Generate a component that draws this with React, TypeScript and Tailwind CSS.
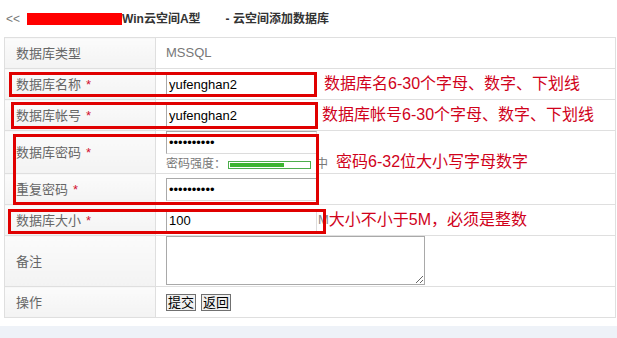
import React from "react";

const font = "font-['Liberation_Sans','Noto_Sans_CJK_SC',sans-serif]";

function Label({ text, req }: { text: string; req?: boolean }) {
  return (
    <td className="w-[151px] border border-[#dfdfdf] bg-gradient-to-b from-[#fbfbfb] to-[#f3f3f3] p-0 pl-[11px] align-middle text-[13px] leading-[15px] text-[#666]">
      {text}
      {req && <span className="ml-[5px] text-[#d2122e]">*</span>}
    </td>
  );
}

function TextInput({ value, pwd }: { value: string; pwd?: boolean }) {
  return (
    <input
      type={pwd ? "password" : "text"}
      defaultValue={value}
      className="block h-[23px] w-[151px] border border-[#a9a9a9] border-r-[#dcdcdc] border-b-[#dcdcdc] px-[2px] text-[13px] text-black outline-none"
    />
  );
}

function Note({ children }: { children: React.ReactNode }) {
  return <span className="text-[16px] leading-none text-[#d0021b]">{children}</span>;
}

export default function App() {
  return (
    <div className={`relative h-[338px] w-[617px] overflow-hidden bg-white ${font}`}>
      <div className="flex h-[37px] items-center pl-[6px] text-[12px]">
        <span className="text-[#777]">&lt;&lt;</span>
        <span className="ml-[7px] h-[12px] w-[95px] bg-[#ff0000]" />
        <span className="font-bold text-[#333]">Win云空间A型</span>
        <span className="ml-[25px] font-bold text-[#333]">- 云空间添加数据库</span>
      </div>

      <table className="ml-[4px] w-[612px] border-collapse">
        <tbody>
          <tr className="h-[31px]">
            <Label text="数据库类型" />
            <td className="border border-[#dfdfdf] p-0 pl-[10px] text-[13px] text-[#777]">MSSQL</td>
          </tr>
          <tr className="h-[31px]">
            <Label text="数据库名称" req />
            <td className="border border-[#dfdfdf] p-0 pl-[10px]">
              <div className="flex items-center">
                <TextInput value="yufenghan2" />
                <span className="ml-[7px]">
                  <Note>数据库名6-30个字母、数字、下划线</Note>
                </span>
              </div>
            </td>
          </tr>
          <tr className="h-[31px]">
            <Label text="数据库帐号" req />
            <td className="border border-[#dfdfdf] p-0 pl-[10px]">
              <div className="flex items-center">
                <TextInput value="yufenghan2" />
                <span className="ml-[5px]">
                  <Note>数据库帐号6-30个字母、数字、下划线</Note>
                </span>
              </div>
            </td>
          </tr>
          <tr className="h-[43px]">
            <Label text="数据库密码" req />
            <td className="border border-[#dfdfdf] p-0 pl-[10px] align-top">
              <TextInput value="1234567890" pwd />
              <div className="mt-[4px] flex h-[13px] items-center text-[12px] leading-[13px] text-[#777]">
                <span>密码强度：</span>
                <span className="ml-[2px] flex h-[8px] w-[83px] items-center border border-[#4cae4c] p-[1px]">
                  <span className="h-full w-[54px] bg-[#3cb531]" />
                </span>
                <span className="ml-[5px]">中</span>
                <span className="relative -top-[3px] ml-[8px]">
                  <Note>密码6-32位大小写字母数字</Note>
                </span>
              </div>
            </td>
          </tr>
          <tr className="h-[31px]">
            <Label text="重复密码" req />
            <td className="border border-[#dfdfdf] p-0 pl-[10px]">
              <TextInput value="1234567890" pwd />
            </td>
          </tr>
          <tr className="h-[31px]">
            <Label text="数据库大小" req />
            <td className="border border-[#dfdfdf] p-0 pl-[10px]">
              <div className="flex items-center">
                <TextInput value="100" />
                <span className="ml-[1px] text-[13px] text-[#888]">M</span>
                <Note>大小不小于5M，必须是整数</Note>
              </div>
            </td>
          </tr>
          <tr className="h-[51px]">
            <Label text="备注" />
            <td className="border border-[#dfdfdf] p-0 pl-[10px] align-top">
              <textarea className="block h-[49px] w-[259px] resize border border-[#a9a9a9] outline-none" />
            </td>
          </tr>
          <tr className="h-[31px]">
            <Label text="操作" />
            <td className="border border-[#dfdfdf] p-0 pl-[10px]">
              <div className="flex gap-[5px]">
                <button className="h-[17px] border border-[#707070] bg-[#f0f0f0] px-[1px] text-[13px] leading-none text-black">
                  提交
                </button>
                <button className="h-[17px] border border-[#707070] bg-[#f0f0f0] px-[1px] text-[13px] leading-none text-black">
                  返回
                </button>
              </div>
            </td>
          </tr>
        </tbody>
      </table>

      <div className="mt-[8px] h-[20px] bg-[#eef2f8]" />

      {/* red annotation boxes */}
      <div className="absolute left-[9px] top-[72px] h-[25px] w-[308px] border-[3px] border-[#e00000]" />
      <div className="absolute left-[11px] top-[102px] h-[27px] w-[307px] border-[3px] border-[#e00000]" />
      <div className="absolute left-[13px] top-[134px] h-[71px] w-[306px] border-[3px] border-[#e00000]" />
      <div className="absolute left-[8px] top-[209px] h-[25px] w-[318px] border-[3px] border-[#e00000]" />
    </div>
  );
}
